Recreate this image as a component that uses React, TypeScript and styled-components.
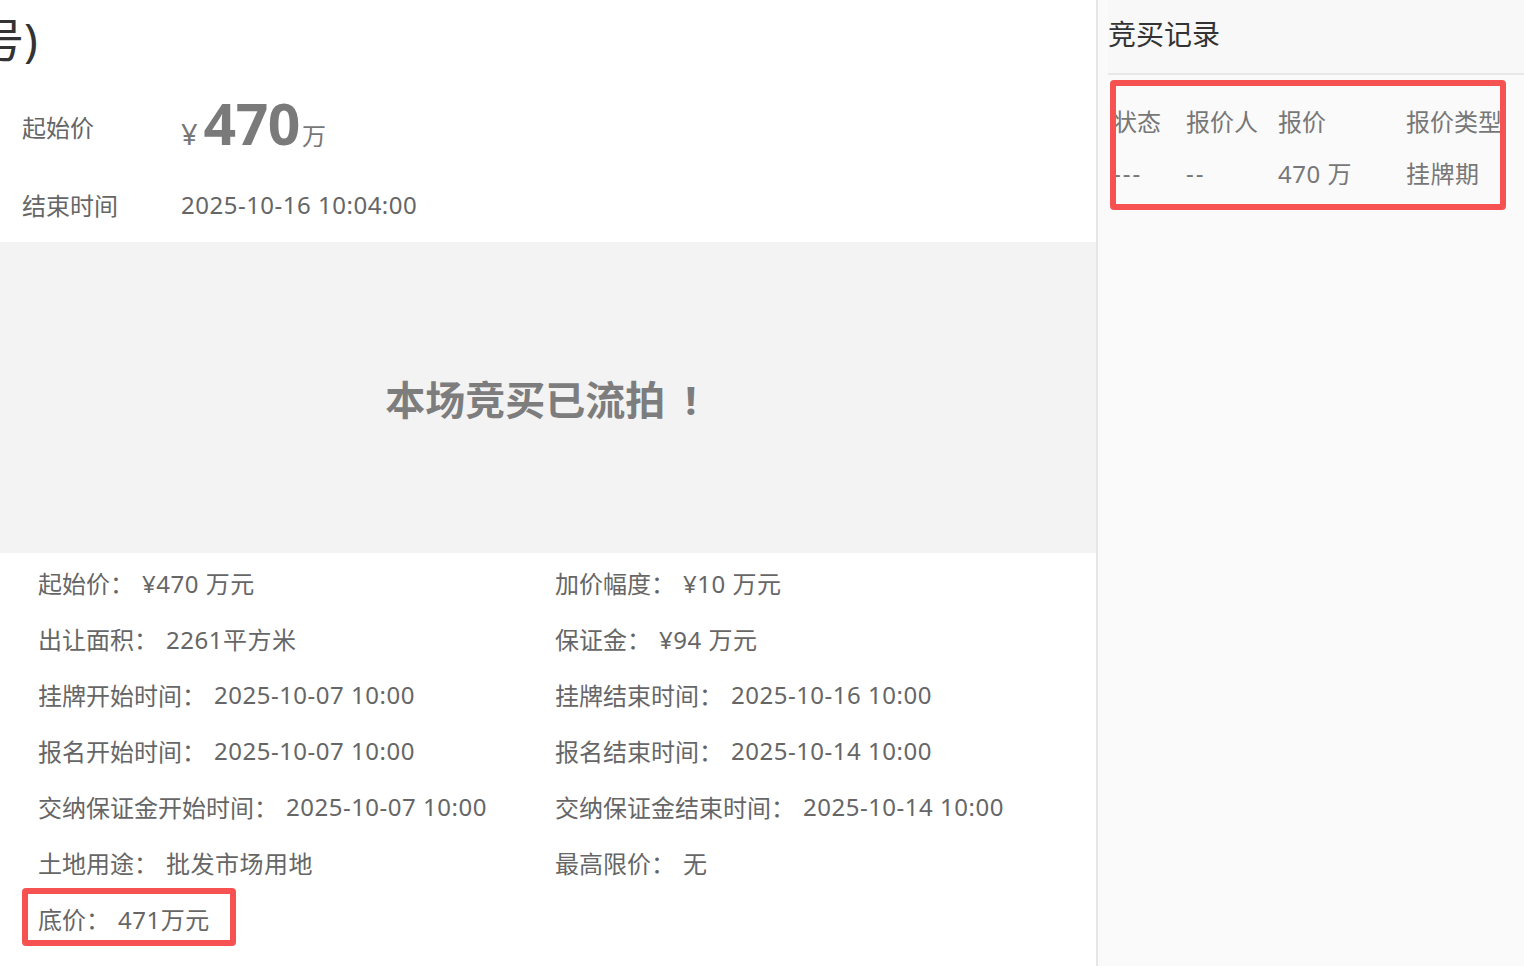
import React from "react";
import styled, { createGlobalStyle } from "styled-components";

const GlobalStyle = createGlobalStyle`
  html, body {
    margin: 0;
    padding: 0;
    background: #fff;
  }
  body {
    font-family: "Noto Sans", "Noto Sans CJK SC", sans-serif;
    overflow: hidden;
  }
`;

const infoRows: [string, string][][] = [
  [
    ["起始价：", "¥470 万元"],
    ["加价幅度：", "¥10 万元"],
  ],
  [
    ["出让面积：", "2261平方米"],
    ["保证金：", "¥94 万元"],
  ],
  [
    ["挂牌开始时间：", "2025-10-07 10:00"],
    ["挂牌结束时间：", "2025-10-16 10:00"],
  ],
  [
    ["报名开始时间：", "2025-10-07 10:00"],
    ["报名结束时间：", "2025-10-14 10:00"],
  ],
  [
    ["交纳保证金开始时间：", "2025-10-07 10:00"],
    ["交纳保证金结束时间：", "2025-10-14 10:00"],
  ],
  [
    ["土地用途：", "批发市场用地"],
    ["最高限价：", "无"],
  ],
];

const App: React.FC = () => {
  return (
    <>
      <GlobalStyle />
      <Page>
        <Main>
          <Title>号)</Title>
          <PriceRow $height={96}>
            <PriceLabel>起始价</PriceLabel>
            <PriceValue>
              <Yen>¥</Yen>
              <BigNumber>470</BigNumber>
              <Unit>万</Unit>
            </PriceValue>
          </PriceRow>
          <PriceRow $height={60}>
            <PriceLabel>结束时间</PriceLabel>
            <PlainValue>2025-10-16 10:04:00</PlainValue>
          </PriceRow>
          <Band>
            <BandText>
              本场竞买已流拍<Bang>!</Bang>
            </BandText>
          </Band>
          <InfoGrid>
            {infoRows.flat().map(([label, value], i) => (
              <InfoItem key={i}>
                <InfoLabel>{label}</InfoLabel>
                <InfoValue>{value}</InfoValue>
              </InfoItem>
            ))}
            <InfoItem>
              <InfoLabel>底价：</InfoLabel>
              <InfoValue>471万元</InfoValue>
              <Highlight $top={-2} $left={-16} $width={214} $height={58} />
            </InfoItem>
          </InfoGrid>
        </Main>
        <Aside>
          <AsideHeader>竞买记录</AsideHeader>
          <RecordTable>
            <thead>
              <tr>
                <Th $width={73}>状态</Th>
                <Th $width={92}>报价人</Th>
                <Th $width={128}>报价</Th>
                <Th>报价类型</Th>
              </tr>
            </thead>
            <tbody>
              <tr>
                <Td $wide>---</Td>
                <Td $wide>--</Td>
                <Td>470 万</Td>
                <Td>挂牌期</Td>
              </tr>
            </tbody>
          </RecordTable>
          <Highlight $top={80} $left={12} $width={396} $height={130} />
        </Aside>
      </Page>
    </>
  );
};

export default App;

const Page = styled.div`
  display: flex;
  width: 1524px;
  height: 966px;
  overflow: hidden;
`;

const Main = styled.main`
  width: 1096px;
  flex-shrink: 0;
  background: #fff;
`;

const Title = styled.h1`
  margin: 0 0 0 -22px;
  height: 78px;
  font-size: 46px;
  line-height: 78px;
  font-weight: 400;
  color: #333;
  white-space: nowrap;
`;

const PriceRow = styled.div<{ $height: number }>`
  display: grid;
  grid-template-columns: 159px 1fr;
  align-items: center;
  height: ${(p) => p.$height}px;
  padding-left: 22px;
`;

const PriceLabel = styled.span`
  font-size: 24px;
  color: #666;
`;

const PriceValue = styled.div`
  display: flex;
  align-items: baseline;
  color: #777;
  margin-top: -6px;
`;

const Yen = styled.span`
  font-size: 29px;
  margin-right: 6px;
`;

const BigNumber = styled.span`
  font-size: 57px;
  font-weight: 700;
  color: #7a7a7a;
  letter-spacing: -0.5px;
`;

const Unit = styled.span`
  font-size: 24px;
  color: #777;
  margin-left: 2px;
`;

const PlainValue = styled.span`
  font-size: 24px;
  color: #666;
  letter-spacing: 0.5px;
`;

const Band = styled.section`
  display: flex;
  align-items: center;
  justify-content: center;
  height: 311px;
  margin-top: 8px;
  background: #f3f3f3;
`;

const BandText = styled.h2`
  margin: 0;
  font-size: 40px;
  font-weight: 700;
  color: #7d7d7d;
  font-family: "Noto Sans CJK SC", sans-serif;
  white-space: nowrap;
`;

const Bang = styled.span`
  margin-left: 20px;
  padding-right: 14px;
  font-family: "Noto Sans", sans-serif;
`;

const InfoGrid = styled.div`
  display: grid;
  grid-template-columns: 517px 1fr;
  grid-auto-rows: 56px;
  padding: 0 0 0 38px;
  margin-top: 1px;
`;

const InfoItem = styled.div`
  position: relative;
  display: flex;
  align-items: center;
  font-size: 24px;
  color: #666;
  white-space: nowrap;
`;

const InfoLabel = styled.span`
  margin-right: 8px;
`;

const InfoValue = styled.span`
  letter-spacing: 0.5px;
`;

const Aside = styled.aside`
  position: relative;
  flex: 1;
  border-left: 2px solid #e6e6e6;
  background: #fafafa;
`;

const AsideHeader = styled.h3`
  margin: 0 0 0 10px;
  height: 73px;
  border-bottom: 2px solid #e8e8e8;
  font-size: 28px;
  line-height: 69px;
  font-weight: 400;
  color: #333;
  background: #f8f8f8;
`;

const RecordTable = styled.table`
  margin: 19px 0 0 15px;
  border-collapse: collapse;
  font-size: 24px;
  color: #777;
  white-space: nowrap;
`;

const Th = styled.th<{ $width?: number }>`
  width: ${(p) => (p.$width ? `${p.$width}px` : "auto")};
  height: 52px;
  padding: 0;
  text-align: left;
  font-weight: 400;
`;

const Td = styled.td<{ $wide?: boolean }>`
  height: 52px;
  padding: 0;
  letter-spacing: ${(p) => (p.$wide ? "2px" : "0.5px")};
`;

const Highlight = styled.div<{
  $top: number;
  $left: number;
  $width: number;
  $height: number;
}>`
  position: absolute;
  top: ${(p) => p.$top}px;
  left: ${(p) => p.$left}px;
  width: ${(p) => p.$width}px;
  height: ${(p) => p.$height}px;
  box-sizing: border-box;
  border: 6px solid #f75252;
  border-radius: 4px;
  pointer-events: none;
`;
